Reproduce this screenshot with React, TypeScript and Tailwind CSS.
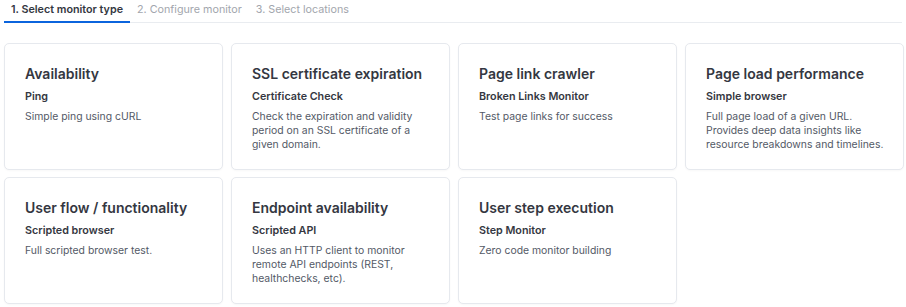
import React from "react"

interface IMonitorType {
    title: string
    label: string
    description: string
}

const monitorTypes: IMonitorType[] = [
    { title: "Availability", label: "Ping", description: "Simple ping using cURL" },
    {
        title: "SSL certificate expiration",
        label: "Certificate Check",
        description: "Check the expiration and validity period on an SSL certificate of a given domain.",
    },
    { title: "Page link crawler", label: "Broken Links Monitor", description: "Test page links for success" },
    {
        title: "Page load performance",
        label: "Simple browser",
        description: "Full page load of a given URL. Provides deep data insights like resource breakdowns and timelines.",
    },
    { title: "User flow / functionality", label: "Scripted browser", description: "Full scripted browser test." },
    {
        title: "Endpoint availability",
        label: "Scripted API",
        description: "Uses an HTTP client to monitor remote API endpoints (REST, healthchecks, etc).",
    },
    { title: "User step execution", label: "Step Monitor", description: "Zero code monitor building" },
]

const steps = ["1. Select monitor type", "2. Configure monitor", "3. Select locations"]

const MonitorCard = ({ title, label, description }: IMonitorType) => {
    return (
        <div className="h-[127px] rounded-[5px] border border-[#e6e9ee] bg-white pl-[20px] pr-[14px] pt-[21px] shadow-[0_1px_2px_rgba(0,0,0,0.03)]">
            <div className="text-[14px] leading-[18px] font-semibold text-[#343741]">{title}</div>
            <div className="mt-[6px] text-[10.75px] leading-[15px] font-semibold text-[#343741]">{label}</div>
            <div className="mt-[6px] text-[10.4px] leading-[14px] text-[#535966]">{description}</div>
        </div>
    )
}

const App = () => {
    return (
        <div className="min-h-[307px] w-[906px] bg-white font-['Inter',sans-serif]">
            <div className="mx-[4px] flex border-b border-[#e9ecf0]">
                {steps.map((step, index) => (
                    <div
                        key={step}
                        className={`-mb-px flex h-[23px] items-start px-[7px] pt-[2px] text-[10.75px] leading-[15px] ${
                            index === 0
                                ? "border-b-2 border-[#0b64dd] font-semibold text-[#343741]"
                                : "font-normal text-[#a2a6ad]"
                        }`}
                    >
                        {step}
                    </div>
                ))}
            </div>
            <div className="ml-[4px] mt-[20px] grid w-[900px] grid-cols-4 gap-x-[8px] gap-y-[7px]">
                {monitorTypes.map(item => (
                    <MonitorCard key={item.title} {...item} />
                ))}
            </div>
        </div>
    )
}

export default App
